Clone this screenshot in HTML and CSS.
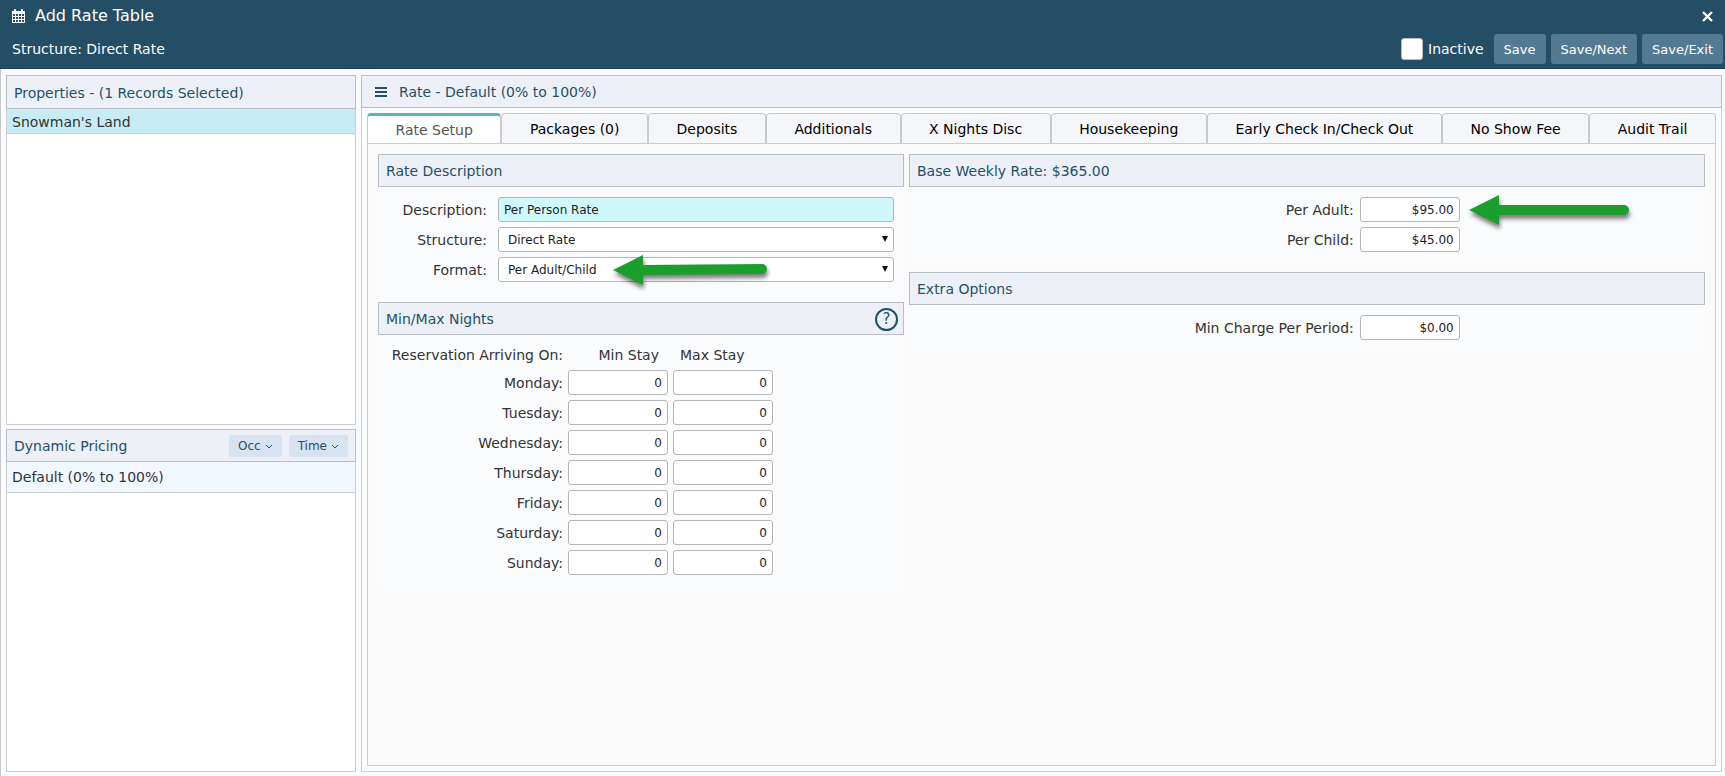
FILE: index.html
```html
<!DOCTYPE html>
<html lang="en">
<head>
<meta charset="utf-8">
<title>Add Rate Table</title>
<link rel="stylesheet" href="styles.css">
</head>
<body>
<header class="topbar">
  <div class="topbar-row">
    <svg class="icon-calendar" viewBox="0 0 13 14" width="13" height="14" aria-hidden="true">
      <path fill="#fff" fill-rule="evenodd" d="M0 2h2V1q0-1 1-1t1 1v1h5V1q0-1 1-1t1 1v1h2v12H0zM1 5v2h2V5zM4 5v2h2V5zM7 5v2h2V5zM10 5v2h2V5zM1 8v2h2V8zM4 8v2h2V8zM7 8v2h2V8zM10 8v2h2V8zM1 11v2h2v-2zM4 11v2h2v-2zM7 11v2h2v-2zM10 11v2h2v-2z"/>
    </svg>
    <h1 class="title">Add Rate Table</h1>
    <button class="close" type="button" aria-label="Close">
      <svg viewBox="0 0 11 11" width="11" height="11" aria-hidden="true"><path d="M1 1l9 9M10 1l-9 9" stroke="#fff" stroke-width="2.300"/></svg>
    </button>
  </div>
  <div class="topbar-row actions">
    <span class="structure">Structure: Direct Rate</span>
    <label class="inactive"><input class="check" type="checkbox">Inactive</label>
    <button class="save" type="button">Save</button>
    <button class="save" type="button">Save/Next</button>
    <button class="save" type="button">Save/Exit</button>
  </div>
</header>

<main class="workspace">
  <aside class="sidebar">
    <section class="panel properties">
      <h2 class="bar">Properties - (1 Records Selected)</h2>
      <div class="row row-selected">Snowman's Land</div>
    </section>
    <section class="panel pricing">
      <div class="bar">
        <h2 class="bar-title">Dynamic Pricing</h2>
        <button class="drop" type="button">Occ <svg viewBox="0 0 8 5" width="8" height="5" aria-hidden="true"><path d="M1 1l3 3 3-3" fill="none" stroke="#245066"/></svg></button>
        <button class="drop" type="button">Time <svg viewBox="0 0 8 5" width="8" height="5" aria-hidden="true"><path d="M1 1l3 3 3-3" fill="none" stroke="#245066"/></svg></button>
      </div>
      <div class="row row-default">Default (0% to 100%)</div>
    </section>
  </aside>

  <section class="panel detail">
    <div class="bar detail-bar">
      <svg class="icon-menu" viewBox="0 0 12 12" width="12" height="12" aria-hidden="true"><path d="M0 2h12M0 6h12M0 10h12" stroke="#245066" stroke-width="2"/></svg>
      <h2 class="bar-title">Rate - Default (0% to 100%)</h2>
    </div>
    <div class="tabbed">
      <nav class="tabs" role="tablist">
        <button class="tab tab-active" type="button" role="tab" aria-selected="true">Rate Setup</button>
        <button class="tab" type="button" role="tab">Packages (0)</button>
        <button class="tab" type="button" role="tab">Deposits</button>
        <button class="tab" type="button" role="tab">Additionals</button>
        <button class="tab" type="button" role="tab">X Nights Disc</button>
        <button class="tab" type="button" role="tab">Housekeeping</button>
        <button class="tab" type="button" role="tab">Early Check In/Check Out</button>
        <button class="tab" type="button" role="tab">No Show Fee</button>
        <button class="tab" type="button" role="tab">Audit Trail</button>
      </nav>
      <div class="tab-body">
        <div class="column">
          <section class="group">
            <h3 class="group-title">Rate Description</h3>
            <div class="fields description-fields">
              <label for="description">Description:</label>
              <input class="field field-required" id="description" type="text" value="Per Person Rate">
              <label for="structure">Structure:</label>
              <div class="select-wrap">
                <select class="field" id="structure"><option>Direct Rate</option></select>
              </div>
              <label for="format">Format:</label>
              <div class="select-wrap">
                <select class="field" id="format"><option>Per Adult/Child</option></select>
                <svg class="arrow arrow-format" viewBox="0 0 154 30" width="154" height="30" aria-hidden="true"><path d="M0 15L30 0v10L149 9a5 5 0 0 1 0 10L30 20v10z" fill="#1b9e2b"/></svg>
              </div>
            </div>
          </section>
          <section class="group">
            <div class="group-title">
              <h3 class="bar-title">Min/Max Nights</h3>
              <button class="help" type="button" aria-label="Help">?</button>
            </div>
            <table class="nights">
              <thead>
                <tr><th class="day" scope="col">Reservation Arriving On:</th><th class="min" scope="col">Min Stay</th><th class="max" scope="col">Max Stay</th></tr>
              </thead>
              <tbody>
                <tr><th class="day" scope="row">Monday:</th><td><input class="field number" type="text" aria-label="Monday min stay" value="0"></td><td><input class="field number" type="text" aria-label="Monday max stay" value="0"></td></tr>
                <tr><th class="day" scope="row">Tuesday:</th><td><input class="field number" type="text" aria-label="Tuesday min stay" value="0"></td><td><input class="field number" type="text" aria-label="Tuesday max stay" value="0"></td></tr>
                <tr><th class="day" scope="row">Wednesday:</th><td><input class="field number" type="text" aria-label="Wednesday min stay" value="0"></td><td><input class="field number" type="text" aria-label="Wednesday max stay" value="0"></td></tr>
                <tr><th class="day" scope="row">Thursday:</th><td><input class="field number" type="text" aria-label="Thursday min stay" value="0"></td><td><input class="field number" type="text" aria-label="Thursday max stay" value="0"></td></tr>
                <tr><th class="day" scope="row">Friday:</th><td><input class="field number" type="text" aria-label="Friday min stay" value="0"></td><td><input class="field number" type="text" aria-label="Friday max stay" value="0"></td></tr>
                <tr><th class="day" scope="row">Saturday:</th><td><input class="field number" type="text" aria-label="Saturday min stay" value="0"></td><td><input class="field number" type="text" aria-label="Saturday max stay" value="0"></td></tr>
                <tr><th class="day" scope="row">Sunday:</th><td><input class="field number" type="text" aria-label="Sunday min stay" value="0"></td><td><input class="field number" type="text" aria-label="Sunday max stay" value="0"></td></tr>
              </tbody>
            </table>
          </section>
        </div>
        <div class="column">
          <section class="group">
            <h3 class="group-title">Base Weekly Rate: $365.00</h3>
            <div class="fields rate-fields">
              <label for="adult">Per Adult:</label>
              <div class="amount">
                <input class="field number" id="adult" type="text" value="$95.00">
                <svg class="arrow arrow-adult" viewBox="0 0 160 30" width="160" height="30" aria-hidden="true"><path d="M0 15L30 0v10H155a5 5 0 0 1 0 10H30v10z" fill="#1b9e2b"/></svg>
              </div>
              <label for="child">Per Child:</label>
              <input class="field number" id="child" type="text" value="$45.00">
            </div>
          </section>
          <section class="group">
            <h3 class="group-title">Extra Options</h3>
            <div class="fields rate-fields">
              <label for="charge">Min Charge Per Period:</label>
              <input class="field number" id="charge" type="text" value="$0.00">
            </div>
          </section>
        </div>
      </div>
    </div>
  </section>
</main>
</body>
</html>
```

FILE: styles.css
```css
* {
  box-sizing: border-box;
}

body {
  display: flex;
  flex-direction: column;
  height: 100vh;
  margin: 0;
  background: #fafbfd;
  color: #333;
  font: 14px/20px "DejaVu Sans", Verdana, sans-serif;
}

h1,
h2,
h3,
th {
  margin: 0;
  font-size: 14px;
  font-weight: normal;
}

button,
input,
select {
  margin: 0;
  font-family: inherit;
}

.topbar {
  padding: 0 2px 4px 12px;
  border-bottom: 1px solid #1b425a;
  background: #244e66;
  color: #fff;
}

.topbar-row {
  display: flex;
  align-items: center;
  height: 32px;
}

.topbar .title {
  margin-left: 10px;
  font-size: 16px;
}

.close {
  display: flex;
  margin-left: auto;
  padding: 0 10px;
  border: 0;
  background: none;
}

.actions {
  gap: 5px;
  height: 30px;
  margin-top: 2px;
}

.structure {
  margin-right: auto;
}

.inactive {
  display: flex;
  align-items: center;
  gap: 5px;
  margin-right: 5px;
}

.check {
  width: 22px;
  height: 22px;
  margin: 0;
  border: 1px solid #bbb;
  border-radius: 3px;
  background: #fff;
  appearance: none;
}

.save {
  height: 30px;
  padding: 0 10px;
  border: 0;
  border-radius: 3px;
  background: #527a92;
  color: #fff;
  font-size: 13px;
}

.workspace {
  display: grid;
  flex: 1;
  grid-template-columns: 350px 1fr;
  gap: 5px;
  padding: 6px 3px 4px 5px;
  border-left: 1px solid #c8cacd;
}

.sidebar {
  display: grid;
  grid-template-rows: 350fr 343fr;
  gap: 4px;
}

.panel {
  display: flex;
  flex-direction: column;
  border: 1px solid #ccced1;
  background: #fff;
}

.bar {
  display: flex;
  align-items: center;
  height: 33px;
  margin: -1px -1px 0;
  padding: 1px 7px 0;
  border: 1px solid #b9bec5;
  background: #edf0f6;
  color: #245066;
}

.properties .bar {
  height: 34px;
}

.bar-title {
  margin-right: auto;
}

.row {
  padding: 3px 5px 1px;
}

.row-selected {
  border-bottom: 1px solid #b9d3da;
  background: #c8ecf5;
}

.row-default {
  padding: 5px;
  border-bottom: 1px solid #ccced1;
  background: #f0f7ff;
}

.drop {
  display: flex;
  align-items: center;
  gap: 4px;
  height: 22px;
  margin-left: 7px;
  padding: 0 9px;
  border: 0;
  border-radius: 2px;
  background: #d7e2f2;
  color: #245066;
  font-size: 12px;
}

.detail {
  background: #fbfcfe;
}

.detail-bar {
  gap: 12px;
  padding: 0 13px;
}

.tabbed {
  display: flex;
  flex: 1;
  flex-direction: column;
  padding: 5px;
}

.tabs {
  display: flex;
}

.tab {
  flex: 1 1 auto;
  height: 30px;
  padding: 0 20px;
  border: 1px solid #c9c9c9;
  border-bottom: 0;
  border-radius: 4px 4px 0 0;
  background: #f5f6f9;
  color: #000;
  font-size: 14px;
}

.tab-active {
  border-top: 3px solid #56b6be;
  background: #fff;
  color: #555;
}

.tab-body {
  display: grid;
  flex: 1;
  grid-template-columns: 526fr 796fr;
  gap: 5px;
  align-items: start;
  padding: 10px;
  border: 1px solid #ccced1;
  background: #fafafa;
}

.column {
  display: grid;
  gap: 5px;
}

.group {
  background: #fafbfd;
}

.group-title {
  display: flex;
  align-items: center;
  height: 33px;
  padding: 1px 7px 0;
  border: 1px solid #b9bec5;
  background: #edf0f6;
  color: #245066;
}

.help {
  width: 23px;
  height: 23px;
  margin-right: -2px;
  padding: 0;
  border: 2px solid #245066;
  border-radius: 50%;
  background: none;
  color: #245066;
  font-size: 15px;
  line-height: 18px;
}

.fields {
  display: grid;
  gap: 5px;
  align-items: center;
  padding: 10px 10px 15px;
  text-align: right;
}

.description-fields {
  grid-template-columns: 99px 1fr;
  column-gap: 11px;
}

.rate-fields {
  grid-template-columns: 56% 100px;
  padding-right: 0;
  padding-left: 0;
}

.rate-fields label {
  padding-right: 1px;
}

.field {
  display: block;
  width: 100%;
  height: 25px;
  padding: 0 5px;
  border: 1px solid #b5b5b5;
  border-radius: 3px;
  background: #fff;
  color: #1c1c2c;
  font-size: 12px;
}

.field-required {
  background: #d0f8fb;
}

.number {
  width: 100px;
  text-align: right;
}

.select-wrap {
  position: relative;
}

.select-wrap .field {
  padding-left: 9px;
  appearance: none;
}

.select-wrap::after {
  position: absolute;
  top: 9px;
  right: 6px;
  border: 3px solid transparent;
  border-top: 6px solid #111;
  border-bottom: 0;
  content: "";
}

.amount {
  position: relative;
}

.arrow {
  position: absolute;
  overflow: visible;
  filter: drop-shadow(1px 4px 2px rgba(0, 0, 0, 0.5));
}

.arrow-format {
  top: -2px;
  left: 115px;
}

.arrow-adult {
  top: -2px;
  left: 109px;
}

.nights {
  width: 395px;
  margin: 0 5px;
  padding: 5px 0 10px;
  border-spacing: 5px;
  table-layout: fixed;
}

.nights th,
.nights td {
  padding: 0;
}

.nights .day {
  width: 175px;
  text-align: right;
}

.nights .min {
  width: 100px;
  padding-right: 9px;
  text-align: right;
}

.nights .max {
  width: 100px;
  padding-left: 7px;
  text-align: left;
}
```
